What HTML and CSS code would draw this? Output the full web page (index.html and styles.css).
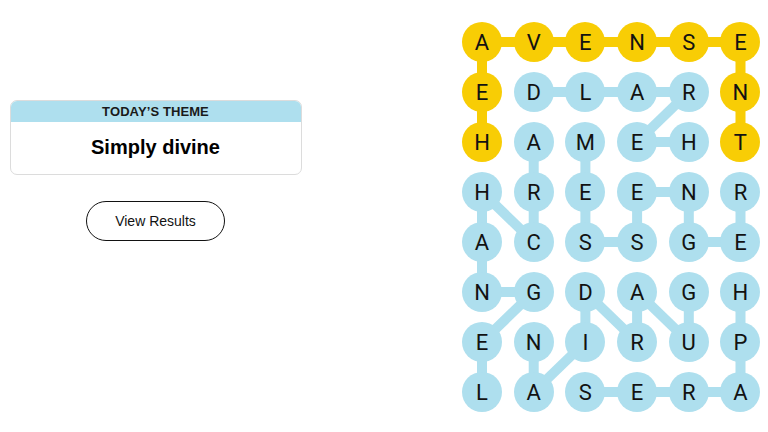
FILE: index.html
```html
<!DOCTYPE html>
<html>
<head>
<meta charset="utf-8">
<link rel="stylesheet" href="styles.css">
</head>
<body>
<div class="page">
  <div class="left">
    <div class="card">
      <div class="card-head">TODAY’S THEME</div>
      <div class="card-body">Simply divine</div>
    </div>
    <button class="btn">View Results</button>
  </div>
  <div class="board">
    <svg class="links" width="299" height="390" viewBox="0 0 299 390">
      <g stroke="#aedfee" stroke-width="10" stroke-linecap="butt">
        <line x1="71.7" y1="70" x2="226.8" y2="70"/>
        <line x1="226.8" y1="70" x2="175.1" y2="120"/>
        <line x1="175.1" y1="120" x2="226.8" y2="120"/>
        <line x1="71.7" y1="120" x2="71.7" y2="170"/>
        <line x1="123.4" y1="120" x2="123.4" y2="220"/>
        <line x1="175.1" y1="170" x2="226.8" y2="170"/>
        <line x1="20" y1="170" x2="71.7" y2="220"/>
        <line x1="71.7" y1="170" x2="71.7" y2="220"/>
        <line x1="175.1" y1="170" x2="175.1" y2="220"/>
        <line x1="226.8" y1="170" x2="226.8" y2="220"/>
        <line x1="278.5" y1="170" x2="278.5" y2="220"/>
        <line x1="123.4" y1="220" x2="175.1" y2="220"/>
        <line x1="226.8" y1="220" x2="278.5" y2="220"/>
        <line x1="20" y1="170" x2="20" y2="270"/>
        <line x1="20" y1="270" x2="71.7" y2="270"/>
        <line x1="71.7" y1="270" x2="20" y2="320"/>
        <line x1="123.4" y1="270" x2="123.4" y2="320"/>
        <line x1="123.4" y1="270" x2="175.1" y2="320"/>
        <line x1="175.1" y1="270" x2="175.1" y2="320"/>
        <line x1="175.1" y1="270" x2="226.8" y2="320"/>
        <line x1="226.8" y1="270" x2="226.8" y2="320"/>
        <line x1="278.5" y1="270" x2="278.5" y2="370"/>
        <line x1="20" y1="320" x2="20" y2="370"/>
        <line x1="71.7" y1="320" x2="71.7" y2="370"/>
        <line x1="123.4" y1="320" x2="71.7" y2="370"/>
        <line x1="123.4" y1="370" x2="278.5" y2="370"/>
      </g>
      <g stroke="#f8cd05" stroke-width="10">
        <line x1="20" y1="20" x2="278.5" y2="20"/>
        <line x1="20" y1="20" x2="20" y2="120"/>
        <line x1="278.5" y1="20" x2="278.5" y2="120"/>
      </g>
    </svg>
    <div class="grid">
      <div class="cell gold">A</div><div class="cell gold">V</div><div class="cell gold">E</div><div class="cell gold">N</div><div class="cell gold">S</div><div class="cell gold">E</div>
      <div class="cell gold">E</div><div class="cell">D</div><div class="cell">L</div><div class="cell">A</div><div class="cell">R</div><div class="cell gold">N</div>
      <div class="cell gold">H</div><div class="cell">A</div><div class="cell">M</div><div class="cell">E</div><div class="cell">H</div><div class="cell gold">T</div>
      <div class="cell">H</div><div class="cell">R</div><div class="cell">E</div><div class="cell">E</div><div class="cell">N</div><div class="cell">R</div>
      <div class="cell">A</div><div class="cell">C</div><div class="cell">S</div><div class="cell">S</div><div class="cell">G</div><div class="cell">E</div>
      <div class="cell">N</div><div class="cell">G</div><div class="cell">D</div><div class="cell">A</div><div class="cell">G</div><div class="cell">H</div>
      <div class="cell">E</div><div class="cell">N</div><div class="cell">I</div><div class="cell">R</div><div class="cell">U</div><div class="cell">P</div>
      <div class="cell">L</div><div class="cell">A</div><div class="cell">S</div><div class="cell">E</div><div class="cell">R</div><div class="cell">A</div>
    </div>
  </div>
</div>
</body>
</html>
```

FILE: styles.css
```css
html, body {
  margin: 0;
  padding: 0;
  background: #ffffff;
}
body {
  font-family: "Liberation Sans", Arial, sans-serif;
  color: #121212;
}
.page {
  display: flex;
  align-items: flex-start;
  padding: 22px 0 0 9.5px;
}
.left {
  width: 292px;
  margin-top: 77.5px;
  display: flex;
  flex-direction: column;
  align-items: center;
}
.card {
  width: 292px;
  box-sizing: border-box;
  border: 1px solid #dcdcdc;
  border-radius: 7px;
  overflow: hidden;
}
.card-head {
  background: #aedfee;
  height: 21px;
  line-height: 22px;
  text-align: center;
  font-size: 13px;
  font-weight: bold;
  letter-spacing: 0.1px;
  color: #1a1a1a;
}
.card-body {
  height: 52px;
  line-height: 50px;
  text-align: center;
  font-size: 20px;
  font-weight: bold;
  color: #000;
}
.btn {
  margin-top: 26px;
  width: 139px;
  height: 40px;
  border: 1px solid #121212;
  border-radius: 20px;
  background: #fff;
  font-family: "Liberation Sans", Arial, sans-serif;
  font-size: 14px;
  color: #121212;
  padding: 0;
}
.board {
  position: relative;
  margin-left: 160.5px;
  width: 299px;
  height: 390px;
}
.links {
  position: absolute;
  left: 0;
  top: 0;
}
.grid {
  position: relative;
  display: grid;
  grid-template-columns: repeat(6, 40px);
  grid-template-rows: repeat(8, 40px);
  column-gap: 11.7px;
  row-gap: 10px;
}
.cell {
  width: 40px;
  height: 40px;
  border-radius: 50%;
  background: #aedfee;
  display: flex;
  align-items: center;
  justify-content: center;
  font-family: Roboto, "Liberation Sans", sans-serif;
  font-size: 22px;
  color: #121212;
}
.cell.gold {
  background: #f8cd05;
}
```
